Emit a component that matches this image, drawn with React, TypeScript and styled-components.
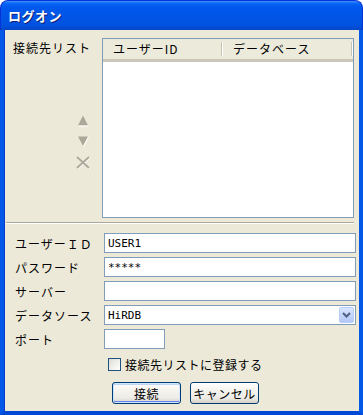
import React from "react";
import styled, { createGlobalStyle } from "styled-components";

const Global = createGlobalStyle`
  html, body { margin: 0; padding: 0; background: #ffffff; }
  #root { width: 363px; height: 415px; }
`;

const jp = `"Noto Sans CJK JP", "Noto Sans", sans-serif`;

const Window = styled.div`
  width: 363px;
  height: 415px;
  display: flex;
  flex-direction: column;
  font-family: ${jp};
  font-size: 12px;
  color: #000;
`;

const TitleBar = styled.div`
  height: 30px;
  box-sizing: border-box;
  border-radius: 8px 8px 0 0;
  background: linear-gradient(
    to bottom,
    #3d93ff 0%,
    #0a67f7 8%,
    #0058ee 20%,
    #0055e5 60%,
    #0052de 85%,
    #0646c6 100%
  );
  border: 1px solid #0831d9;
  border-bottom: none;
  display: flex;
  align-items: center;
  padding-left: 7px;
`;

const Title = styled.span`
  color: #fff;
  font-weight: bold;
  font-size: 13px;
  letter-spacing: 0.5px;
  text-shadow: 1px 1px 0 #0a1e73;
`;

const Frame = styled.div`
  flex: 1;
  display: flex;
  flex-direction: column;
  background: #ece9d8;
  border-left: 4px solid #0458e8;
  border-right: 4px solid #0458e8;
  border-bottom: 4px solid #0449d6;
  box-shadow: inset 1px 0 0 #0a3bcc;
  box-sizing: border-box;
  min-height: 0;
`;

const TopSection = styled.div`
  display: flex;
  padding: 8px 5px 0 9px;
`;

const LeftCol = styled.div`
  width: 89px;
  display: flex;
  flex-direction: column;
`;

const SectionLabel = styled.div`
  margin-top: 3px;
  letter-spacing: 1px;
  line-height: 14px;
`;

const ArrowStack = styled.div`
  margin-top: 60px;
  align-self: flex-end;
  width: 38px;
  display: flex;
  flex-direction: column;
  align-items: center;
  gap: 10px;
`;

const IconBox = styled.svg`
  display: block;
  overflow: visible;
`;

const ListBox = styled.div`
  flex: 1;
  height: 180px;
  box-sizing: border-box;
  border: 1px solid #7f9db9;
  background: #fff;
  display: flex;
  flex-direction: column;
`;

const ListHeader = styled.div`
  height: 23px;
  box-sizing: border-box;
  display: flex;
  background: #ebeadb;
  border-bottom: 3px solid;
  border-image: linear-gradient(to bottom, #e2decd 0, #e2decd 33%, #d6d2c2 33%, #d6d2c2 66%, #cbc7b8 66%) 1;
  border-left: none;
  border-right: none;
  border-top: none;
`;

const HeaderCell = styled.div<{ $w?: number }>`
  ${(p) => (p.$w ? `width: ${p.$w}px;` : "flex: 1;")}
  box-sizing: border-box;
  padding: 3px 0 0 10px;
  letter-spacing: 1px;
  line-height: 14px;
  position: relative;
  &::after {
    content: "";
    position: absolute;
    right: 0;
    top: 3px;
    bottom: 3px;
    width: 2px;
    background: linear-gradient(to right, #c7c5b2 50%, #ffffff 50%);
  }
`;

const Separator = styled.div`
  margin: 4px 5px 0 2px;
  height: 2px;
  box-sizing: border-box;
  border-top: 1px solid #aca899;
  border-bottom: 1px solid #ffffff;
`;

const Form = styled.div`
  display: grid;
  grid-template-columns: 89px 1fr;
  grid-auto-rows: 20px;
  row-gap: 4px;
  padding: 9px 3px 0 11px;
`;

const FieldLabel = styled.label`
  display: flex;
  align-items: center;
  letter-spacing: 1px;
`;

const Input = styled.div<{ $w?: number }>`
  ${(p) => (p.$w ? `width: ${p.$w}px;` : "")}
  height: 20px;
  box-sizing: border-box;
  border: 1px solid #7f9db9;
  background: #fff;
  display: flex;
  align-items: center;
  padding-left: 3px;
  font-family: "DejaVu Sans Mono", "Liberation Mono", monospace;
  font-size: 11px;
`;

const ComboValue = styled.span`
  flex: 1;
`;

const ComboButton = styled.div`
  width: 15px;
  height: 16px;
  margin-right: 1px;
  box-sizing: border-box;
  border: 1px solid #b9cdf6;
  border-radius: 2px;
  background: linear-gradient(to bottom, #d9e6fe 0%, #c0d3fb 60%, #b3c8f6 100%);
  display: flex;
  align-items: center;
  justify-content: center;
`;

const CheckRow = styled.div`
  display: flex;
  align-items: center;
  gap: 4px;
  margin: 9px 0 0 104px;
  height: 13px;
`;

const CheckBox = styled.span`
  width: 13px;
  height: 13px;
  box-sizing: border-box;
  border: 1px solid #1c5180;
  background: linear-gradient(135deg, #dcdcd7 0%, #f2f2ee 60%, #ffffff 100%);
`;

const CheckText = styled.span`
  letter-spacing: 0.5px;
  line-height: 13px;
`;

const ButtonRow = styled.div`
  display: flex;
  gap: 9px;
  margin: 11px 0 0 108px;
`;

const Button = styled.button<{ $default?: boolean }>`
  width: 69px;
  height: 22px;
  box-sizing: border-box;
  border: 1px solid #003c74;
  border-radius: 3px;
  background: linear-gradient(to bottom, #ffffff 0%, #f4f3ee 40%, #ecebe6 75%, #d6d0c5 100%);
  font-family: ${jp};
  font-size: 12px;
  letter-spacing: 0.5px;
  color: #000;
  padding: 0;
  box-shadow: ${(p) =>
    p.$default
      ? "inset 0 0 0 1px #cee7ff, inset 0 -1px 0 1px #6982ee, inset 0 1px 0 1px #bcd4f6"
      : "none"};
`;

function UpIcon() {
  return (
    <IconBox width="10" height="11" viewBox="0 0 10 11">
      <polygon points="5,0.5 10,10.5 0,10.5" fill="#aca899" />
      <line x1="0.5" y1="11" x2="10.5" y2="11" stroke="#fff" strokeWidth="1" />
    </IconBox>
  );
}

function DownIcon() {
  return (
    <IconBox width="10" height="10" viewBox="0 0 10 10">
      <polygon points="0,0.5 10,0.5 5,10" fill="#aca899" />
      <line x1="5.5" y1="10.5" x2="10.5" y2="1" stroke="#fff" strokeWidth="1" />
    </IconBox>
  );
}

function CrossIcon() {
  return (
    <IconBox width="14" height="13" viewBox="0 0 14 13">
      <path d="M1 1 L13 12 M13 1 L1 12" stroke="#fff" strokeWidth="1.8" transform="translate(0.6,0.6)" />
      <path d="M1 1 L13 12 M13 1 L1 12" stroke="#aca899" strokeWidth="1.8" />
    </IconBox>
  );
}

function Chevron() {
  return (
    <IconBox width="9" height="6" viewBox="0 0 9 6">
      <path d="M1 1 L4.5 4.5 L8 1" stroke="#4d6185" strokeWidth="2" fill="none" />
    </IconBox>
  );
}

export default function App() {
  return (
    <>
      <Global />
      <Window>
        <TitleBar>
          <Title>ログオン</Title>
        </TitleBar>
        <Frame>
          <TopSection>
            <LeftCol>
              <SectionLabel>接続先リスト</SectionLabel>
              <ArrowStack>
                <UpIcon />
                <DownIcon />
                <CrossIcon />
              </ArrowStack>
            </LeftCol>
            <ListBox>
              <ListHeader>
                <HeaderCell $w={120}>ユーザーID</HeaderCell>
                <HeaderCell $w={130}>データベース</HeaderCell>
              </ListHeader>
            </ListBox>
          </TopSection>
          <Separator />
          <Form>
            <FieldLabel>ユーザーＩＤ</FieldLabel>
            <Input>USER1</Input>
            <FieldLabel>パスワード</FieldLabel>
            <Input>*****</Input>
            <FieldLabel>サーバー</FieldLabel>
            <Input />
            <FieldLabel>データソース</FieldLabel>
            <Input>
              <ComboValue>HiRDB</ComboValue>
              <ComboButton>
                <Chevron />
              </ComboButton>
            </Input>
            <FieldLabel>ポート</FieldLabel>
            <Input $w={61} />
          </Form>
          <CheckRow>
            <CheckBox />
            <CheckText>接続先リストに登録する</CheckText>
          </CheckRow>
          <ButtonRow>
            <Button $default>接続</Button>
            <Button>キャンセル</Button>
          </ButtonRow>
        </Frame>
      </Window>
    </>
  );
}
